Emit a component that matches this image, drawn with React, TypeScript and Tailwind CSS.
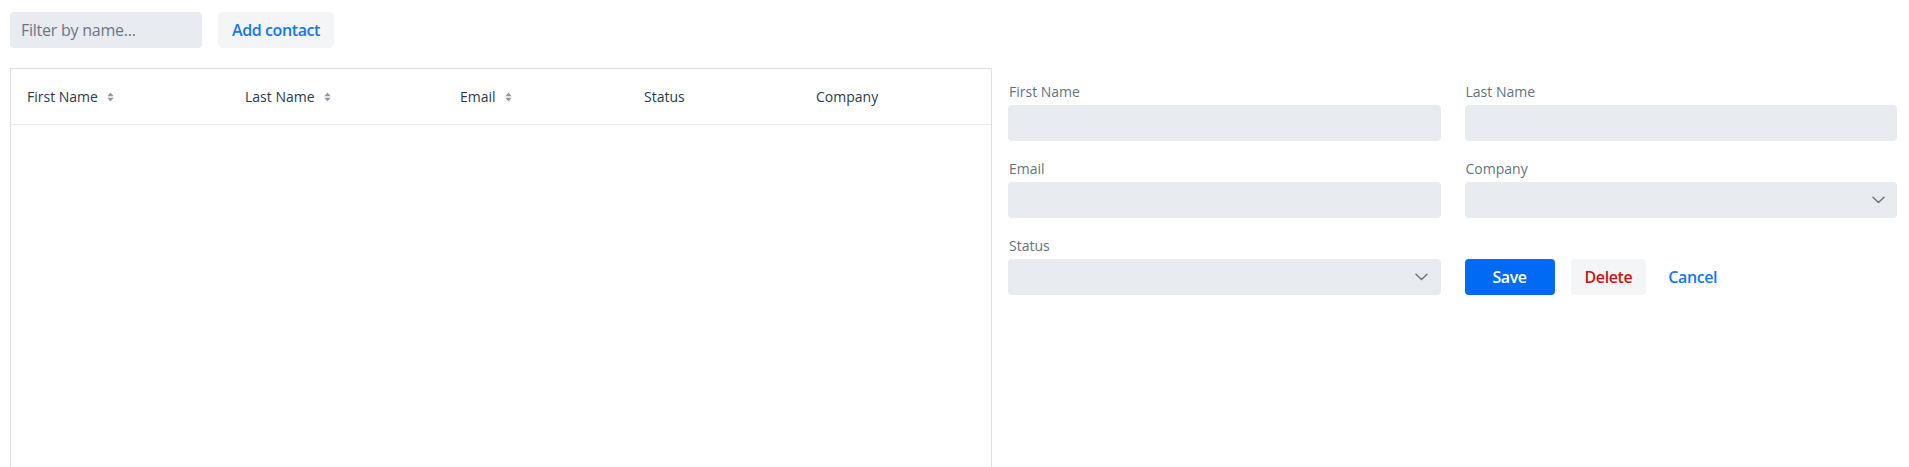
import React from "react";

function Sorter() {
  return (
    <svg width="7" height="10" viewBox="0 0 7 10" className="ml-[9px] shrink-0" aria-hidden>
      <path d="M0.3 4.2 L3.5 0.6 L6.7 4.2 Z" fill="#8f99a6" />
      <path d="M0.3 5.8 L3.5 9.4 L6.7 5.8 Z" fill="#8f99a6" />
    </svg>
  );
}

function Chevron({ right }: { right: string }) {
  return (
    <svg
      width="13"
      height="8"
      viewBox="0 0 13 8"
      className={`absolute top-1/2 -translate-y-1/2 ${right}`}
      aria-hidden
    >
      <path d="M1 1.2 L6.5 6.5 L12 1.2" fill="none" stroke="#6b7684" strokeWidth="1.5" strokeLinecap="round" strokeLinejoin="round" />
    </svg>
  );
}

function Field({ label, select, chevronRight }: { label: string; select?: boolean; chevronRight?: string }) {
  return (
    <div className="flex flex-col">
      <div className="mb-[3px] pl-px text-sm leading-5 text-[#667180]">{label}</div>
      <div className="relative h-9 rounded bg-[#e8ebef]">
        {select && <Chevron right={chevronRight ?? "right-[12px]"} />}
      </div>
    </div>
  );
}

const columns: { name: string; width: string; sort: boolean }[] = [
  { name: "First Name", width: "w-[218px]", sort: true },
  { name: "Last Name", width: "w-[215px]", sort: true },
  { name: "Email", width: "w-[184px]", sort: true },
  { name: "Status", width: "w-[172px]", sort: false },
  { name: "Company", width: "flex-1", sort: false },
];

export default function App() {
  return (
    <div className="h-[467px] overflow-hidden bg-white pl-[10px] pr-[12px] pt-[12px] font-['Open_Sans','Noto_Sans',sans-serif]">
      <div className="flex h-9 items-center gap-4">
        <div className="flex h-9 w-[192px] items-center rounded bg-[#e8ebef] pl-[11px] text-base tracking-[-0.015em] text-[#6b7684]">
          Filter by name...
        </div>
        <button className="flex h-9 w-[116px] items-center justify-center rounded bg-[#f3f5f7] text-base font-semibold tracking-[-0.025em] text-[#1676f3]">
          Add contact
        </button>
      </div>

      <div className="mt-5 flex items-start gap-4">
        <div className="h-[420px] w-[982px] shrink-0 border border-[#dbdfe5]">
          <div className="flex h-[56px] items-center border-b border-[#e8ebef]">
            {columns.map((c) => (
              <div key={c.name} className={`${c.width} flex items-center px-4 text-sm text-[#2a3a4c]`}>
                <span>{c.name}</span>
                {c.sort && <Sorter />}
              </div>
            ))}
          </div>
        </div>

        <div className="grid flex-1 grid-cols-2 gap-x-6 gap-y-[18px] pt-[14px]">
          <Field label="First Name" />
          <Field label="Last Name" />
          <Field label="Email" />
          <Field label="Company" select chevronRight="right-[12px]" />
          <Field label="Status" select chevronRight="right-[13px]" />
          <div className="flex items-center gap-4 self-end">
            <button className="h-9 min-w-[90px] rounded bg-[#006af5] px-[14px] text-base font-semibold tracking-[-0.025em] text-white">
              Save
            </button>
            <button className="h-9 rounded bg-[#f3f5f7] px-[14px] text-base font-semibold tracking-[-0.025em] text-[#ca150c]">
              Delete
            </button>
            <button className="h-9 rounded px-[6px] text-base font-semibold tracking-[-0.025em] text-[#1676f3]">
              Cancel
            </button>
          </div>
        </div>
      </div>
    </div>
  );
}
